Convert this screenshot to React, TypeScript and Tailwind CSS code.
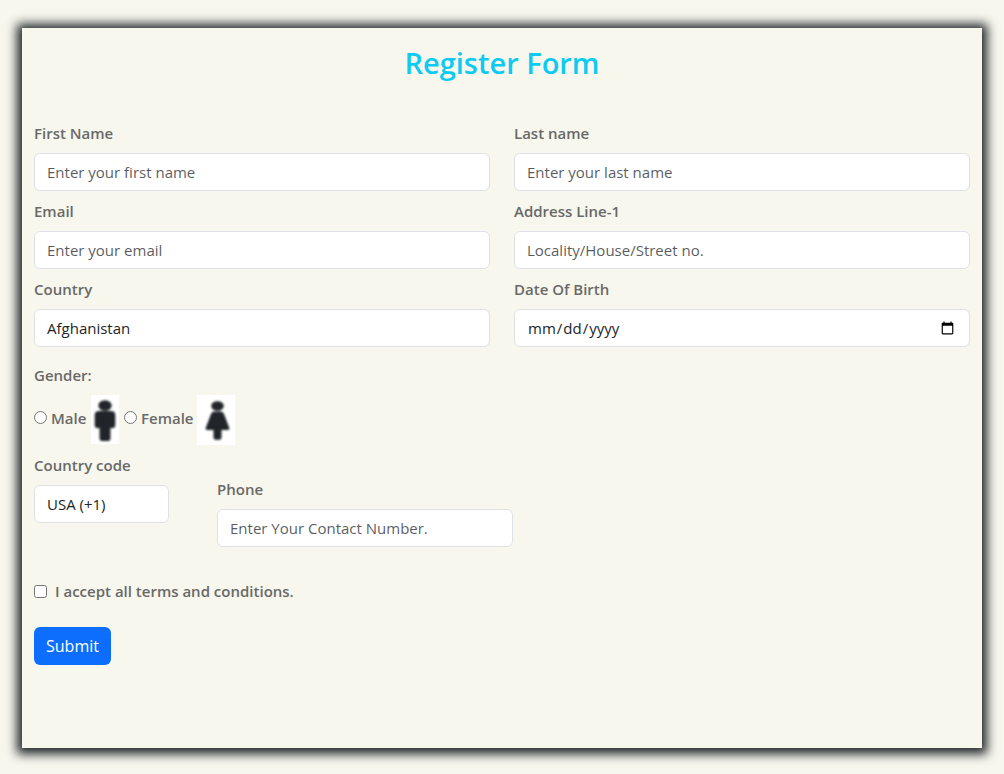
import React from "react";

const controlClass =
  "block h-[38px] w-full appearance-none rounded-md border border-[#dee2e6] bg-white px-3 text-[15px] leading-6 font-normal text-[#212529] placeholder:text-[#212529]/75 focus:border-[#86b7fe] focus:outline-none";
const labelClass = "mb-2 block leading-6";

function TextField({ id, label, placeholder, type = "text" }: { id: string; label: string; placeholder?: string; type?: string }) {
  return (
    <div>
      <label htmlFor={id} className={labelClass}>{label}</label>
      <input id={id} name={id} type={type} placeholder={placeholder} className={controlClass} />
    </div>
  );
}

function SelectField({ id, label, options }: { id: string; label: string; options: string[] }) {
  return (
    <div>
      <label htmlFor={id} className={labelClass}>{label}</label>
      <select id={id} name={id} className={controlClass}>
        {options.map((option) => (
          <option key={option}>{option}</option>
        ))}
      </select>
    </div>
  );
}

function MaleIcon() {
  return (
    <svg width="28" height="49" viewBox="0 0 28 49" className="bg-white" aria-hidden="true">
      <g fill="#212529" className="blur-[1px]">
        <ellipse cx="14" cy="10.5" rx="6.700" ry="5.200" />
        <path d="M8 16H20Q24.300 16 24.300 20V30Q24.300 33 22 33H19.500V43Q19.500 46 17 46H11Q8.500 46 8.500 43V33H6Q3.700 33 3.700 30V20Q3.700 16 8 16Z" />
      </g>
    </svg>
  );
}

function FemaleIcon() {
  return (
    <svg width="38" height="50" viewBox="0 0 38 50" className="bg-white" aria-hidden="true">
      <g fill="#212529" className="blur-[1px]">
        <ellipse cx="20.500" cy="11" rx="6.300" ry="4.800" />
        <path d="M17 16.500H24Q26 16.500 27 19L32.300 33Q32.800 35 31 35H24.500V42Q24.500 44.800 22.500 44.800H18.500Q16.500 44.800 16.500 42V35H10Q8.200 35 8.700 33L14 19Q15 16.500 17 16.500Z" />
      </g>
    </svg>
  );
}

export default function App() {
  return (
    <div className="min-h-screen bg-[#f7f7ee] px-[22px] pt-7 pb-[26px] font-['Open_Sans','Noto_Sans',sans-serif] text-[15px] font-semibold text-[#696969]">
      <main className="px-3 pt-4 pb-[83px] shadow-[0_1px_10px_5px_#212529]">
        <h1 className="mb-[39px] text-center text-[29px] leading-[38px] font-semibold text-[#0dcaf0]">Register Form</h1>
        <form onSubmit={(event) => event.preventDefault()}>
          <div className="grid grid-cols-2 gap-x-6 gap-y-2">
            <TextField id="first-name" label="First Name" placeholder="Enter your first name" />
            <TextField id="last-name" label="Last name" placeholder="Enter your last name" />
            <TextField id="email" label="Email" type="email" placeholder="Enter your email" />
            <TextField id="address" label="Address Line-1" placeholder="Locality/House/Street no." />
            <SelectField id="country" label="Country" options={["Afghanistan", "Albania", "Algeria", "Australia", "Canada", "India", "United States"]} />
            <TextField id="birth-date" label="Date Of Birth" type="date" />
          </div>
          <fieldset className="mt-4">
            <legend className={labelClass}>Gender:</legend>
            <div className="flex items-start">
              <label className="flex items-start">
                <input type="radio" name="gender" value="male" className="mt-4 size-[13px]" />
                <span className="mt-[11px] ml-1 w-10 leading-6">Male</span>
                <MaleIcon />
              </label>
              <label className="ml-[5px] flex items-start">
                <input type="radio" name="gender" value="female" className="mt-4 size-[13px]" />
                <span className="mt-[11px] ml-1 w-14 leading-6">Female</span>
                <FemaleIcon />
              </label>
            </div>
          </fieldset>
          <div className="mt-2 flex items-start gap-12">
            <div className="w-[135px]">
              <SelectField id="country-code" label="Country code" options={["USA (+1)", "UK (+44)", "India (+91)"]} />
            </div>
            <div className="mt-6 w-[296px]">
              <TextField id="phone" label="Phone" type="tel" placeholder="Enter Your Contact Number." />
            </div>
          </div>
          <div className="mt-8 flex items-center gap-2">
            <input id="terms" type="checkbox" className="size-[13px]" />
            <label htmlFor="terms" className="leading-6">I accept all terms and conditions.</label>
          </div>
          <button type="submit" className="mt-6 h-[38px] rounded-md bg-[#0d6efd] px-3 text-base font-normal text-white hover:bg-[#0b5ed7]">Submit</button>
        </form>
      </main>
    </div>
  );
}
